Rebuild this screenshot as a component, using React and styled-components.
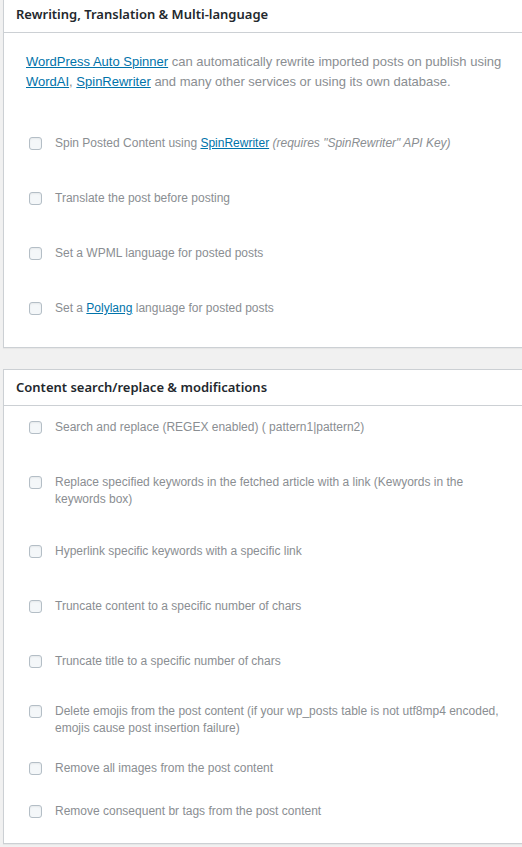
import React from "react"
import styled, { createGlobalStyle } from "styled-components"

const Global = createGlobalStyle`
  html, body {
    margin: 0;
    padding: 0;
    background: #f1f1f1;
    overflow-x: hidden;
  }
  body {
    font-family: "Liberation Sans", Arial, sans-serif;
  }
`

const Page = styled.div`
  margin-top: -4px;
  padding-left: 3px;
  width: 560px;
`

const Panel = styled.div`
  background: #fff;
  border: 1px solid #ccd0d4;
  box-shadow: 0 1px 1px rgba(0, 0, 0, 0.04);
  margin-bottom: 21px;
`

const Title = styled.h2`
  margin: 0;
  padding: 8px 12px;
  font-family: "Noto Sans", "Open Sans", sans-serif;
  font-size: 13px;
  font-weight: 600;
  line-height: 19px;
  color: #23282d;
  border-bottom: 1px solid #ccd0d4;
`

const Inside = styled.div`
  padding: 0 12px ${(p) => p.$bottom}px;
`

const Description = styled.p`
  margin: 0;
  padding: 19px 10px 0;
  width: 484px;
  font-size: 13px;
  line-height: 20px;
  color: #8a8e92;
`

const Link = styled.a`
  color: #0073aa;
  text-decoration: underline;
`

const Row = styled.label`
  display: flex;
  align-items: flex-start;
  margin-top: ${(p) => p.$top}px;
  padding-left: 13px;
`

const Box = styled.span`
  flex: none;
  width: 11px;
  height: 11px;
  margin-top: 2px;
  border: 1px solid #b4bec6;
  border-radius: 3px;
  background: #f4f7f9;
  box-shadow: inset 0 1px 2px rgba(0, 0, 0, 0.06);
`

const Label = styled.span`
  margin-left: 13px;
  width: 455px;
  font-size: 12px;
  line-height: 17px;
  color: #8a8e92;
`

const Note = styled.i`
  color: #8a8e92;
`

const Option = ({ top, children }) => (
  <Row $top={top}>
    <Box />
    <Label>{children}</Label>
  </Row>
)

export default function App() {
  return (
    <>
      <Global />
      <Page>
        <Panel>
          <Title>Rewriting, Translation &amp; Multi-language</Title>
          <Inside $bottom={30}>
            <Description>
              <Link href="#">WordPress Auto Spinner</Link> can automatically rewrite imported posts on publish using{" "}
              <Link href="#">WordAI</Link>, <Link href="#">SpinRewriter</Link> and many other services or using its own database.
            </Description>
            <Option top={43}>
              Spin Posted Content using <Link href="#">SpinRewriter</Link>{" "}
              <Note>(requires "SpinRewriter" API Key)</Note>
            </Option>
            <Option top={38}>Translate the post before posting</Option>
            <Option top={38}>Set a WPML language for posted posts</Option>
            <Option top={38}>
              Set a <Link href="#">Polylang</Link> language for posted posts
            </Option>
          </Inside>
        </Panel>
        <Panel>
          <Title>Content search/replace &amp; modifications</Title>
          <Inside $bottom={23}>
            <Option top={13}>Search and replace (REGEX enabled) ( pattern1|pattern2)</Option>
            <Option top={38}>
              Replace specified keywords in the fetched article with a link (Kewyords in the keywords box)
            </Option>
            <Option top={35}>Hyperlink specific keywords with a specific link</Option>
            <Option top={38}>Truncate content to a specific number of chars</Option>
            <Option top={38}>Truncate title to a specific number of chars</Option>
            <Option top={33}>
              Delete emojis from the post content (if your wp_posts table is not utf8mp4 encoded, emojis cause post insertion failure)
            </Option>
            <Option top={23}>Remove all images from the post content</Option>
            <Option top={26}>Remove consequent br tags from the post content</Option>
          </Inside>
        </Panel>
      </Page>
    </>
  )
}
